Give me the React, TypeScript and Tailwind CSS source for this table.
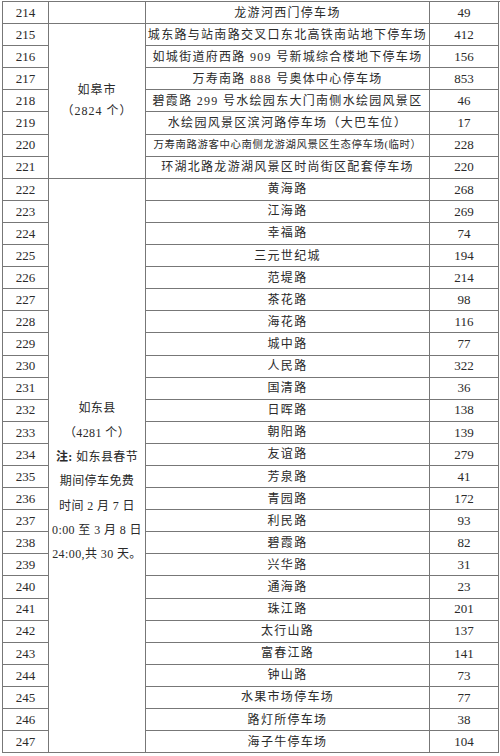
import React from "react";

type Row = { no: number; name: string; count: number; small?: boolean };

const rugaoRows: Row[] = [
  { no: 215, name: "城东路与站南路交叉口东北高铁南站地下停车场", count: 412 },
  { no: 216, name: "如城街道府西路 909 号新城综合楼地下停车场", count: 156 },
  { no: 217, name: "万寿南路 888 号奥体中心停车场", count: 853 },
  { no: 218, name: "碧霞路 299 号水绘园东大门南侧水绘园风景区", count: 46 },
  { no: 219, name: "水绘园风景区滨河路停车场（大巴车位）", count: 17 },
  { no: 220, name: "万寿南路游客中心南侧龙游湖风景区生态停车场(临时）", count: 228, small: true },
  { no: 221, name: "环湖北路龙游湖风景区时尚街区配套停车场", count: 220 },
];

const rudongRows: Row[] = [
  { no: 222, name: "黄海路", count: 268 },
  { no: 223, name: "江海路", count: 269 },
  { no: 224, name: "幸福路", count: 74 },
  { no: 225, name: "三元世纪城", count: 194 },
  { no: 226, name: "范堤路", count: 214 },
  { no: 227, name: "茶花路", count: 98 },
  { no: 228, name: "海花路", count: 116 },
  { no: 229, name: "城中路", count: 77 },
  { no: 230, name: "人民路", count: 322 },
  { no: 231, name: "国清路", count: 36 },
  { no: 232, name: "日晖路", count: 138 },
  { no: 233, name: "朝阳路", count: 139 },
  { no: 234, name: "友谊路", count: 279 },
  { no: 235, name: "芳泉路", count: 41 },
  { no: 236, name: "青园路", count: 172 },
  { no: 237, name: "利民路", count: 93 },
  { no: 238, name: "碧霞路", count: 82 },
  { no: 239, name: "兴华路", count: 31 },
  { no: 240, name: "通海路", count: 23 },
  { no: 241, name: "珠江路", count: 201 },
  { no: 242, name: "太行山路", count: 137 },
  { no: 243, name: "富春江路", count: 141 },
  { no: 244, name: "钟山路", count: 73 },
  { no: 245, name: "水果市场停车场", count: 77 },
  { no: 246, name: "路灯所停车场", count: 38 },
  { no: 247, name: "海子牛停车场", count: 104 },
];

const cell = "border-r border-b border-[#777] flex items-center justify-center";

function RowCells({ row }: { row: Row }) {
  return (
    <>
      <div className={`${cell} col-start-1 text-[13px]`}>{row.no}</div>
      <div
        className={`${cell} col-start-3 whitespace-nowrap ${
          row.small ? "text-[10.4px] tracking-[0.6px]" : "text-[12px] tracking-[1.3px]"
        }`}
      >
        {row.name}
      </div>
      <div className={`${cell} col-start-4 text-[13px]`}>{row.count}</div>
    </>
  );
}

export default function App() {
  return (
    <div className="w-[500px] h-[756px] bg-white pt-[1px] pl-[2px] overflow-hidden">
      <div
        className="grid grid-cols-[46px_97px_284px_69px] grid-rows-[repeat(34,22.1px)] border-l border-t border-[#777] text-[#2a2a2a]"
        style={{ fontFamily: '"Liberation Serif", "Noto Sans CJK SC", serif' }}
      >
        {/* 214 */}
        <div className={`${cell} col-start-1 row-start-1 text-[13px]`}>214</div>
        <div className="border-r border-b border-[#777] col-start-2 row-start-1" />
        <div className={`${cell} col-start-3 row-start-1 text-[12px] tracking-[1.3px]`}>龙游河西门停车场</div>
        <div className={`${cell} col-start-4 row-start-1 text-[13px]`}>49</div>

        {/* 如皋市 */}
        <div className="border-r border-b border-[#777] col-start-2 row-start-2 row-span-7 flex flex-col items-center justify-center text-[12px] leading-[21px] tracking-[1px]">
          <span>如皋市</span>
          <span>（2824 个）</span>
        </div>

        {/* 如东县 */}
        <div className="border-r border-b border-[#777] col-start-2 row-start-9 row-span-26 flex flex-col items-center justify-center pt-[32px] text-[12px] leading-[24.3px] tracking-[0.4px] whitespace-nowrap">
          <span>如东县</span>
          <span>（4281 个）</span>
          <span>
            <b>注:</b> 如东县春节
          </span>
          <span>期间停车免费</span>
          <span>时间 2 月 7 日</span>
          <span>0:00 至 3 月 8 日</span>
          <span>24:00,共 30 天。</span>
        </div>

        {[...rugaoRows, ...rudongRows].map((row) => (
          <RowCells key={row.no} row={row} />
        ))}
      </div>
    </div>
  );
}
